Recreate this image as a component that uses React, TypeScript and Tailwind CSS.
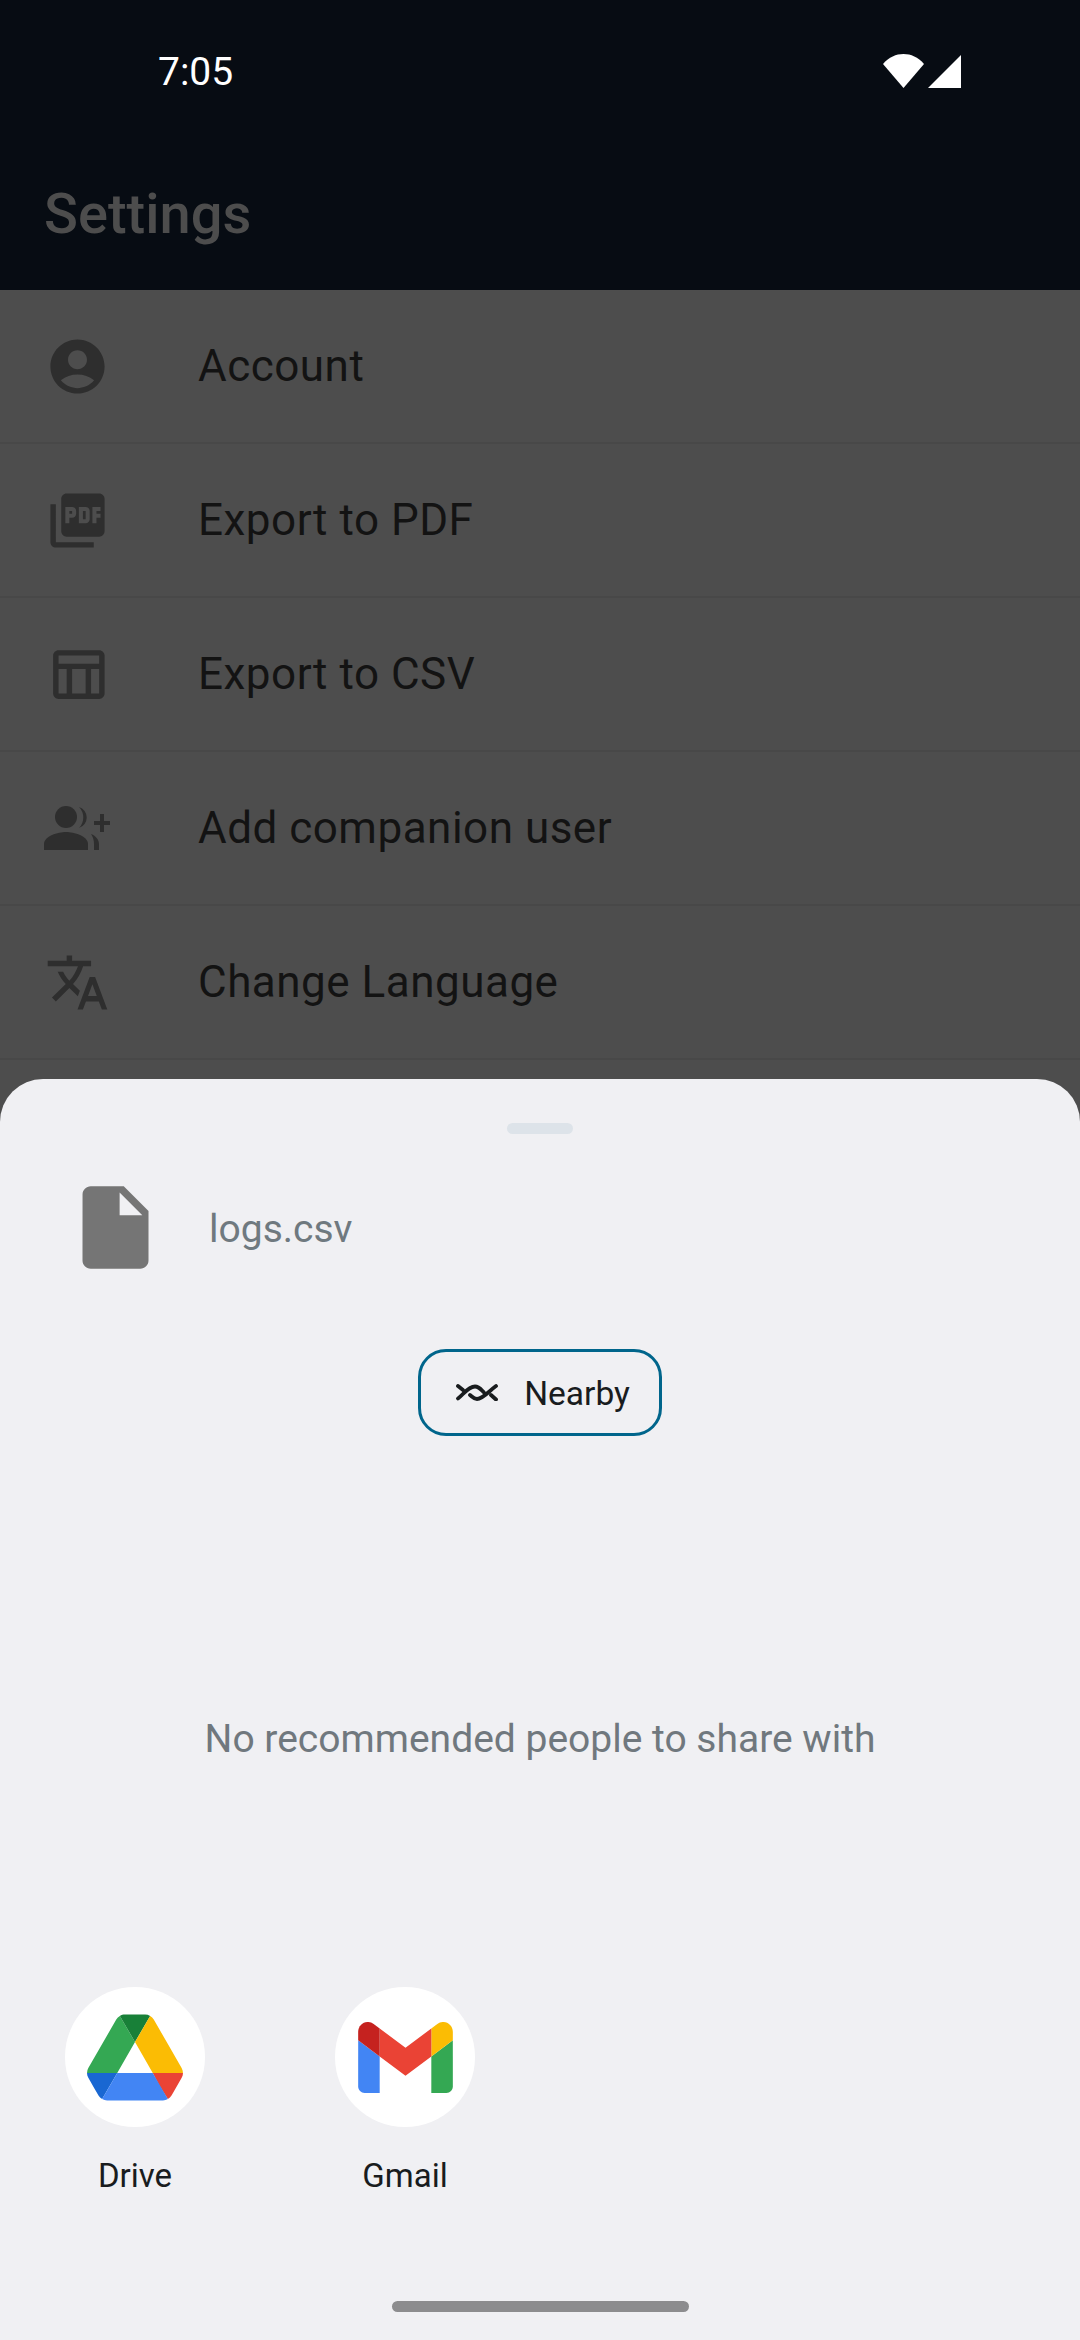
import React from 'react';
import { MdAccountCircle, MdPictureAsPdf, MdOutlineTableChart, MdTranslate, MdInsertDriveFile } from 'react-icons/md';

const GroupAddIcon = () => (
  <svg viewBox="0 0 66 44" className="w-[66px] h-[44px]" fill="currentColor">
    <circle cx="22" cy="11" r="11" />
    <path d="M0 44v-6c0-8 14-12 22-12s22 4 22 12v6z" />
    <path d="M35 1a11 11 0 0 1 0 21a15 15 0 0 0 0-21z" />
    <path d="M47 28c5 2 8 6 8 10v6h-5v-6c0-4-1-7-3-10z" />
    <path d="M56 8h4v7h6v4h-6v7h-4v-7h-6v-4h6z" />
  </svg>
);

const NearbyIcon = () => (
  <svg viewBox="0 0 42 17" className="w-[42px] h-[17px]" fill="none" stroke="#191c1e" strokeWidth="3.8" strokeLinecap="round">
    <path d="M2 2l5 4" />
    <path d="M2 14.5C7 11 12 2.5 19 2.5c4 0 6 3 9 6" />
    <path d="M14 11c2.5 2 4 4 7 4c6 0 12-8 19-13" />
    <path d="M35 11l5 4.5" />
  </svg>
);

const DriveLogo = () => (
  <svg viewBox="0 0 87.3 78" className="w-[96px] h-[87px]">
    <path d="m6.6 66.85 3.85 6.65c.8 1.4 1.95 2.5 3.3 3.3l13.75-23.8h-27.5c0 1.55.4 3.1 1.2 4.5z" fill="#1967d2" />
    <path d="m43.65 25-13.75-23.8c-1.35.8-2.5 1.9-3.3 3.3l-25.4 44a9.06 9.06 0 0 0 -1.2 4.5h27.5z" fill="#34a853" />
    <path d="m73.55 76.8c1.35-.8 2.5-1.9 3.3-3.3l1.6-2.75 7.65-13.25c.8-1.4 1.2-2.95 1.2-4.5h-27.502l5.852 11.5z" fill="#ea4335" />
    <path d="m43.65 25 13.75-23.8c-1.35-.8-2.9-1.2-4.5-1.2h-18.5c-1.6 0-3.15.45-4.5 1.2z" fill="#188038" />
    <path d="m59.8 53h-32.3l-13.75 23.8c1.35.8 2.9 1.2 4.5 1.2h50.8c1.6 0 3.15-.45 4.5-1.2z" fill="#4285f4" />
    <path d="m73.4 26.5-12.7-22c-.8-1.4-1.95-2.5-3.3-3.3l-13.75 23.8 16.15 28h27.45c0-1.55-.4-3.1-1.2-4.5z" fill="#fbbc04" />
  </svg>
);

const GmailLogo = () => (
  <svg viewBox="52 42 88 66" className="w-[95px] h-[71px]">
    <path fill="#4285f4" d="M58 108h14V74L52 59v43c0 3.32 2.69 6 6 6" />
    <path fill="#34a853" d="M120 108h14c3.32 0 6-2.69 6-6V59l-20 15" />
    <path fill="#fbbc04" d="M120 48v26l20-15v-8c0-7.42-8.47-11.65-14.4-7.2" />
    <path fill="#ea4335" d="M72 74V48l24 18 24-18v26L96 92" />
    <path fill="#c5221f" d="M52 51v8l20 15V48l-5.6-4.2c-5.94-4.45-14.4-.22-14.4 7.2" />
  </svg>
);

const rows = [
  { label: 'Account', icon: <MdAccountCircle size={65} /> },
  { label: 'Export to PDF', icon: <MdPictureAsPdf size={65} /> },
  { label: 'Export to CSV', icon: <MdOutlineTableChart size={65} /> },
  { label: 'Add companion user', icon: <GroupAddIcon /> },
  { label: 'Change Language', icon: <MdTranslate size={65} /> },
];

const apps = [
  { label: 'Drive', logo: <DriveLogo /> },
  { label: 'Gmail', logo: <GmailLogo /> },
];

export default function App() {
  return (
    <div className="w-[1080px] h-[2340px] flex flex-col overflow-hidden bg-[#4d4d4d] font-['Roboto',sans-serif]">
      {/* dimmed app behind the share sheet */}
      <div className="h-[290px] shrink-0 bg-[#070c13] flex flex-col">
        <div className="h-[144px] pl-[158px] pr-[119px] flex items-center justify-between">
          <span className="text-[39px] text-white leading-none">7:05</span>
          <div className="flex items-start gap-[4px] -mt-[3px]">
            <svg viewBox="0 0 41 34" className="w-[41px] h-[34px]" fill="#fff">
              <path d="M0 10C6 3 13 0 20.5 0S35 3 41 10L20.5 34z" />
            </svg>
            <svg viewBox="0 0 33 33" className="w-[33px] h-[33px] mt-[1px]" fill="#fff">
              <path d="M33 0v33H0z" />
            </svg>
          </div>
        </div>
        <div className="pl-[44px] mt-[35px] text-[56px] font-medium text-[#4d4d4d] leading-[70px]">Settings</div>
      </div>

      {rows.map((row) => (
        <div key={row.label} className="h-[154px] shrink-0 flex items-center border-b-2 border-[#484848]">
          <div className="w-[198px] shrink-0 pr-[44px] flex justify-center text-[#2e2e2e]">{row.icon}</div>
          <span className="text-[44px] tracking-[0.5px] text-[#131313]">{row.label}</span>
        </div>
      ))}

      {/* share sheet */}
      <div className="mt-auto h-[1261px] bg-[#f0f0f3] rounded-t-[43px] flex flex-col items-center">
        <div className="mt-[44px] w-[66px] h-[11px] rounded-full bg-[#dde3e9]" />

        <div className="self-stretch mt-[52px] h-[83px] flex items-center pl-[66px] gap-[44px]">
          <MdInsertDriveFile size={99} className="text-[#757575] shrink-0" />
          <span className="text-[39px] leading-[46px] mt-[2px] text-[#6f797f]">logs.csv</span>
        </div>

        <div className="mt-[80px] w-[244px] h-[87px] pl-[6px] rounded-[28px] border-[3px] border-[#00658b] flex items-center justify-center gap-[26px]">
          <NearbyIcon />
          <span className="text-[33.5px] leading-[40px] mt-[2px] text-[#191c1e]">Nearby</span>
        </div>

        <div className="mt-[280px] text-[39px] leading-[46px] text-[#70787e]">No recommended people to share with</div>

        <div className="self-stretch mt-[225px] pl-[65px] flex gap-[130px]">
          {apps.map((app) => (
            <div key={app.label} className="w-[140px] flex flex-col items-center">
              <div className="w-[140px] h-[140px] rounded-full bg-white flex items-center justify-center">{app.logo}</div>
              <span className="mt-[29px] text-[33px] leading-[40px] text-[#191c1e]">{app.label}</span>
            </div>
          ))}
        </div>

        <div className="mt-auto mb-[28px] w-[297px] h-[11px] rounded-full bg-[#8c8c8e]" />
      </div>
    </div>
  );
}
